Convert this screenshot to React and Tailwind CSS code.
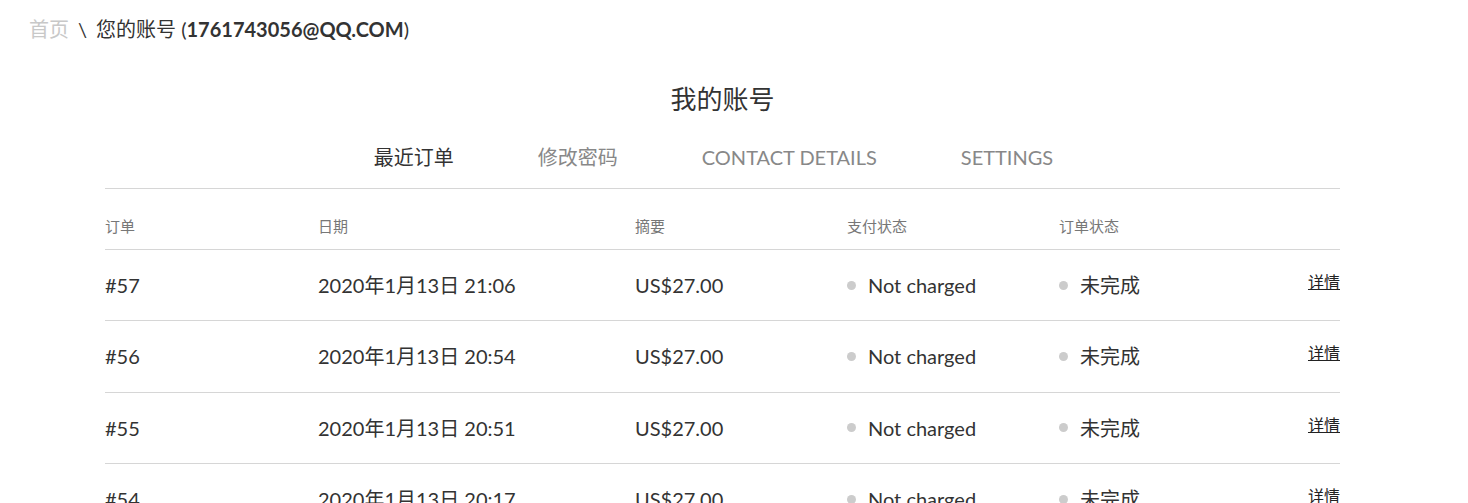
import React from "react";

const orders = [
  { id: "#57", date: "2020年1月13日 21:06" },
  { id: "#56", date: "2020年1月13日 20:54" },
  { id: "#55", date: "2020年1月13日 20:51" },
  { id: "#54", date: "2020年1月13日 20:17" },
];

const font = { fontFamily: 'Lato, "Noto Sans CJK SC", sans-serif' };

export default function App() {
  return (
    <div className="min-h-screen bg-white text-[#333]" style={font}>
      <div className="px-[29px] pt-[15px] text-[20px] leading-[28px]">
        <span className="text-[#c8c8c8]">首页</span>
        <span className="mx-[9px]">\</span>
        <span>
          您的账号 (<b className="font-bold">1761743056@QQ.COM</b>)
        </span>
      </div>

      <div className="mx-[105px] w-[1235px]">
        <h1 className="mt-[38px] text-center text-[26px] leading-[36px]">我的账号</h1>

        <div className="mt-[26px] flex justify-center gap-[84px] pr-[18px] text-[20px] leading-[28px] text-[#888]">
          <span className="text-[#333]">最近订单</span>
          <span>修改密码</span>
          <span>CONTACT DETAILS</span>
          <span>SETTINGS</span>
        </div>

        <div className="mt-[17px] border-t border-[#d6d6d6]">
          <div className="grid h-[61px] grid-cols-[213px_317px_212px_212px_1fr] items-center border-b border-[#d6d6d6] pt-[14px] text-[15px] text-[#777]">
            <span>订单</span>
            <span>日期</span>
            <span>摘要</span>
            <span>支付状态</span>
            <span>订单状态</span>
          </div>

          {orders.map((o) => (
            <div
              key={o.id}
              className="grid h-[71.33px] grid-cols-[213px_317px_212px_212px_1fr] items-center border-b border-[#d6d6d6] text-[20px]"
            >
              <span>{o.id}</span>
              <span>{o.date}</span>
              <span>US$27.00</span>
              <span className="flex items-center">
                <span className="mr-[12px] h-[9px] w-[9px] rounded-full bg-[#ccc]" />
                Not charged
              </span>
              <span className="flex items-center justify-between">
                <span className="flex items-center">
                  <span className="mr-[12px] h-[9px] w-[9px] rounded-full bg-[#ccc]" />
                  未完成
                </span>
                <a href="#" className="-mt-[6px] text-[16px] text-[#222] underline">
                  详情
                </a>
              </span>
            </div>
          ))}
        </div>
      </div>
    </div>
  );
}
